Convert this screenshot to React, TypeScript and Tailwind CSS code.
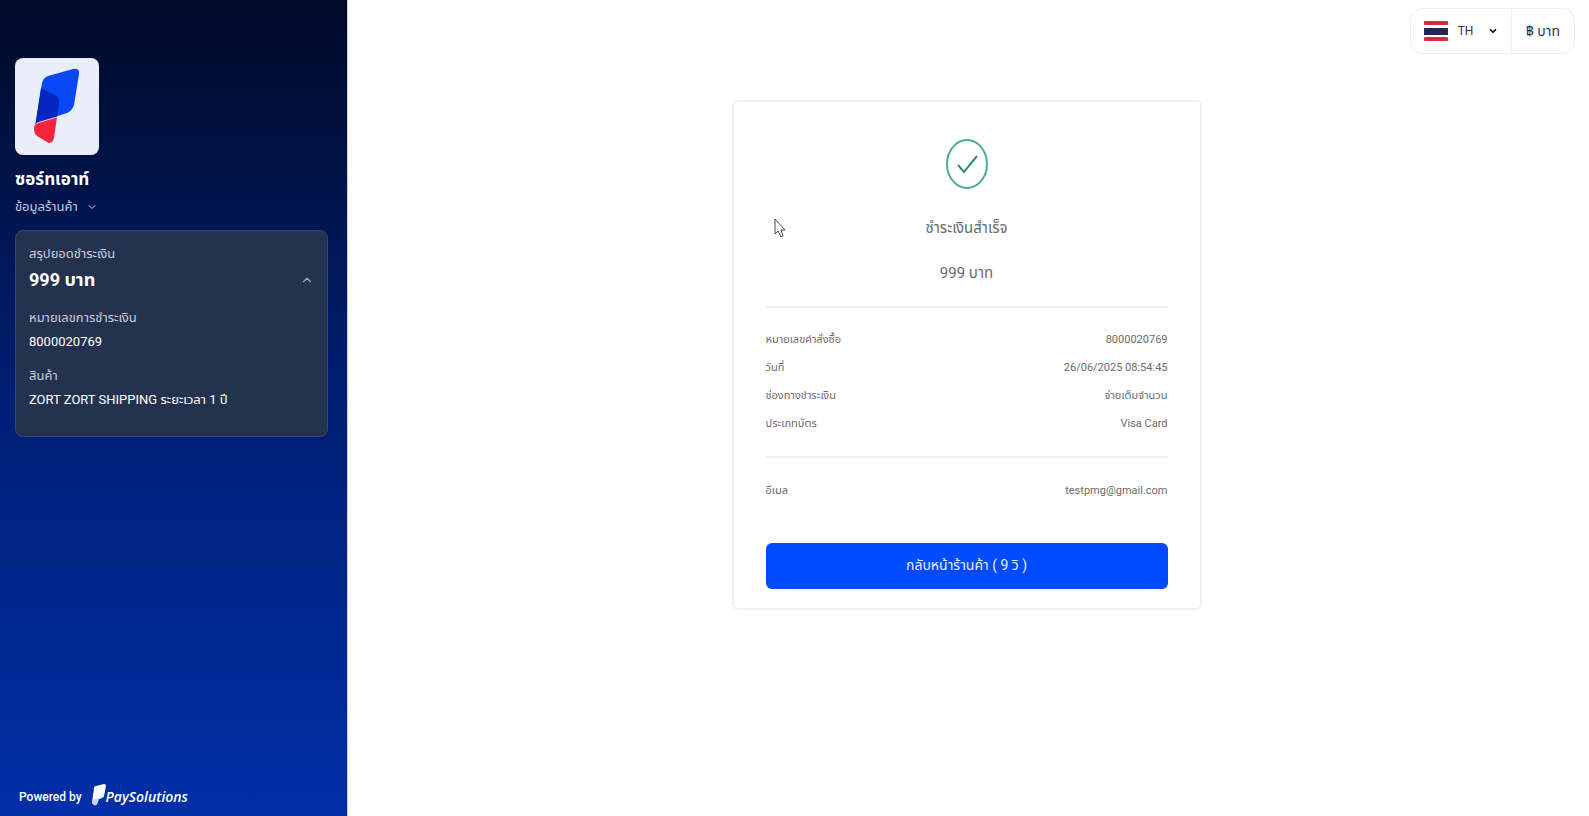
import React, { useState } from 'react';
import { ChevronDown, ChevronUp } from 'lucide-react';

const orderRows = [
  { label: 'หมายเลขคำสั่งซื้อ', value: '8000020769' },
  { label: 'วันที่', value: '26/06/2025 08:54:45' },
  { label: 'ช่องทางชำระเงิน', value: 'จ่ายเต็มจำนวน' },
  { label: 'ประเภทบัตร', value: 'Visa Card' },
];

const contactRows = [{ label: 'อีเมล', value: 'testpmg@gmail.com' }];

function ShopLogo() {
  return (
    <svg viewBox="0 0 84 97" className="h-[97px] w-[84px] rounded-lg bg-[#e9eefa]" aria-hidden="true">
      <path d="M20 66 L42 59 L39 80 Q37 87 32 84 L22 78 Q19 76 19 70Z" fill="#f7263d" />
      <path
        d="M27 25 Q28 20 33 18 L58 11 Q65 10 64 16 L59 47 Q57 53 52 55 L24 64 Q20 65 20 69 Z"
        fill="#0849f5"
      />
      <path d="M26 30 L40 37 Q45 40 44 46 L42 59 L24 64 Q20 65 20 69 Z" fill="#0626bd" />
      <path d="M20 67 Q21 65 25 64 L42 59" fill="none" stroke="#e9a5dc" strokeWidth="1" />
    </svg>
  );
}

function PaySolutionsLogo() {
  return (
    <a href="#" className="flex items-center text-white">
      <svg viewBox="0 0 14 22" className="h-[22px] w-[14px]" aria-hidden="true">
        <path d="M2 4 Q2 2 4 2 L12 0 Q14 0 14 2 L12 12 Q12 13 10 14 L7 15 L5 20 Q4 22 2 21 L0 19 Z" fill="#fff" />
        <path d="M2 15 L7 14 L5 20 Q4 22 2 21 L0 19 Z" fill="#c3d2ff" />
      </svg>
      <span className="pt-1 font-['Open_Sans','Noto_Sans',sans-serif] text-sm leading-6 font-semibold italic">PaySolutions</span>
    </a>
  );
}

function ThaiFlag() {
  return (
    <svg viewBox="0 0 24 20" className="h-5 w-6" aria-hidden="true">
      <rect width="24" height="20" rx="1" fill="#fff" />
      <rect width="24" height="4" rx="1" fill="#e0263f" />
      <rect y="7" width="24" height="7" fill="#26235f" />
      <rect y="16" width="24" height="4" rx="1" fill="#e0263f" />
    </svg>
  );
}

function DetailList({ rows }: { rows: { label: string; value: string }[] }) {
  return (
    <dl className="text-[11px] leading-7 text-[#6b6b6b]">
      {rows.map((row) => (
        <div key={row.label} className="flex justify-between">
          <dt>{row.label}</dt>
          <dd>{row.value}</dd>
        </div>
      ))}
    </dl>
  );
}

export default function App() {
  const [lang, setLang] = useState('TH');
  const [open, setOpen] = useState(true);

  return (
    <div className="flex min-h-screen bg-white font-['Roboto','Noto_Sans_Thai',sans-serif]">
      <aside className="flex w-[348px] shrink-0 flex-col border-r border-[#c9cde0] bg-linear-to-b from-[#000a28] via-[#001f76] to-[#002fa8] px-[15px] pt-[58px] pb-[7px] text-white">
        <ShopLogo />
        <h1 className="mt-2 text-[17px] leading-8 font-bold">ซอร์ทเอาท์</h1>
        <button type="button" className="flex items-center gap-2 text-[13px] leading-6 text-[#c5cbe0]">
          ข้อมูลร้านค้า
          <ChevronDown className="h-3 w-3" />
        </button>

        <section className="mr-1 mt-[11px] rounded-lg border border-[#34466a] bg-[#25324f] px-[13px] pt-[11px] pb-6">
          <p className="text-[13px] leading-6 text-[#c9cfdd]">สรุปยอดชำระเงิน</p>
          <div className="flex items-center justify-between">
            <p className="text-lg leading-7 font-bold">999 บาท</p>
            <button type="button" aria-label="สรุปยอดชำระเงิน" onClick={() => setOpen(!open)} className="text-[#a3abbd]">
              <ChevronUp className="h-[14px] w-[14px]" />
            </button>
          </div>
          {open && (
            <dl className="text-[13px] leading-6">
              <dt className="mt-3 text-[#c9cfdd]">หมายเลขการชำระเงิน</dt>
              <dd>8000020769</dd>
              <dt className="mt-[10px] text-[#c9cfdd]">สินค้า</dt>
              <dd>ZORT ZORT SHIPPING ระยะเวลา 1 ปี</dd>
            </dl>
          )}
        </section>

        <footer className="mt-auto flex items-center gap-[10px] pl-1">
          <span className="pt-1 text-xs leading-6 font-medium">Powered by</span>
          <PaySolutionsLogo />
        </footer>
      </aside>

      <main className="flex min-w-0 flex-1 flex-col pr-1">
        <header className="flex justify-end px-[10px] pt-2">
          <div className="flex h-[46px] items-center rounded-xl border border-[#eef0f2] text-[#27364f]">
            <label className="flex h-full items-center gap-[10px] border-r border-[#eef0f2] px-[13px]">
              <ThaiFlag />
              <span className="relative flex items-center">
                <select
                  aria-label="Language"
                  value={lang}
                  onChange={(e) => setLang(e.target.value)}
                  className="w-10 appearance-none bg-transparent text-xs"
                >
                  <option value="TH">TH</option>
                  <option value="EN">EN</option>
                </select>
                <ChevronDown className="pointer-events-none absolute right-0 h-[10px] w-[10px] text-black" strokeWidth={4} />
              </span>
            </label>
            <span className="px-[14px] text-sm">฿ บาท</span>
          </div>
        </header>

        <section className="relative mx-auto mt-[46px] w-full max-w-[470px] rounded-md border-2 border-[#f0f0f1] px-8 pt-[37px] pb-[19px]">
          <svg viewBox="0 0 42 50" className="mx-auto h-[50px] w-[42px]" fill="none" stroke="#4fae90" strokeWidth="2" aria-hidden="true">
            <ellipse cx="21" cy="25" rx="20" ry="24" />
            <path d="M12 26 L18 33 L31 17" stroke="#2b8f6d" />
          </svg>
          <h2 className="mt-[23px] text-center text-[15px] leading-8 text-[#6b6b6b]">ชำระเงินสำเร็จ</h2>
          <p className="mt-[13px] text-center text-[15px] leading-8 text-[#6b6b6b]">999 บาท</p>

          <div className="mt-[17px] border-y-2 border-[#f0f0f1] py-[18px]">
            <DetailList rows={orderRows} />
          </div>
          <div className="pt-[19px] pb-4">
            <DetailList rows={contactRows} />
          </div>

          <button
            type="button"
            className="mt-[22px] h-[46px] w-full rounded-md bg-[#004aff] pb-[2px] text-sm text-[#e6efff] hover:bg-blue-700"
          >
            กลับหน้าร้านค้า ( 9 วิ )
          </button>

          {/* mouse pointer */}
          <svg viewBox="0 0 12 20" className="absolute top-[116px] left-10 h-5 w-3" aria-hidden="true">
            <path d="M1 1 V16 L4 13 L7 19 L9 18 L7 12 H11 Z" fill="#fff" stroke="#444" strokeWidth="1" />
          </svg>
        </section>
      </main>
    </div>
  );
}
